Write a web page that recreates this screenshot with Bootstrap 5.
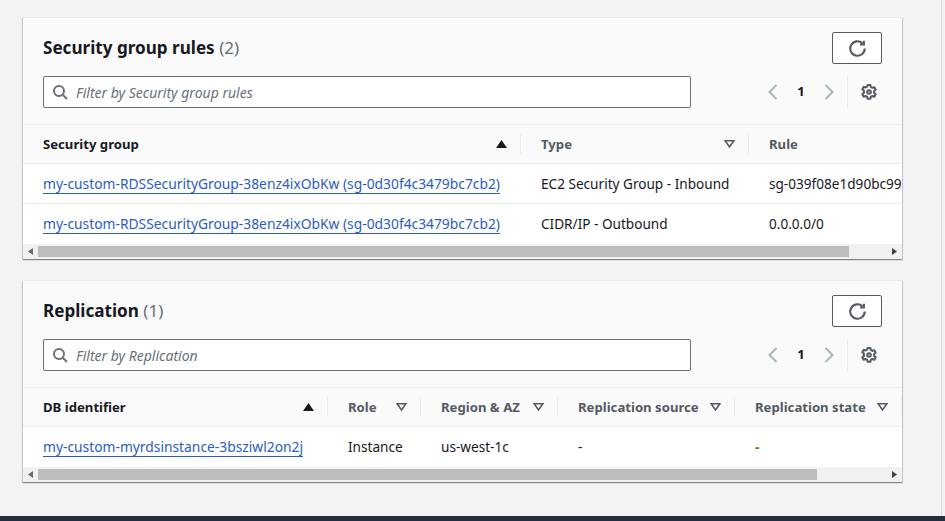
<!DOCTYPE html>
<html lang="en">
<head>
    <meta charset="UTF-8">
    <meta name="viewport" content="width=device-width, initial-scale=1.0">
    <title>Database connectivity</title>
    <link href="https://cdn.jsdelivr.net/npm/bootstrap@5.3.0/dist/css/bootstrap.min.css" rel="stylesheet">
    <style>
        html, body { height: 100%; overflow: hidden; }
        body {
            background: #f2f3f3;
            color: #16191f;
            font-family: "Noto Sans", "Open Sans", sans-serif;
            font-size: 14px;
        }
        .page-area {
            width: 942px;
            height: 516px;
            padding: 17px 39px 0 23px;
            border-right: 1px solid #d5dbdb;
        }
        .page-foot { height: 5px; background: #232f3e; }
        .panel {
            border: 0;
            border-top: 1px solid #eaeded;
            border-radius: 0;
            background: #fafafa;
            box-shadow: 0 1px 1px 0 rgba(0,28,36,.3), 1px 1px 1px 0 rgba(0,28,36,.15), -1px 1px 1px 0 rgba(0,28,36,.15);
            overflow: hidden;
        }
        .panel + .panel { margin-top: 21px; }
        .panel-head { padding: 14px 20px 16px 20px; border-bottom: 1px solid #eaeded; }
        .panel-top { margin-bottom: 12px; }
        .panel-title { font-size: 17.1px; line-height: 30px; font-weight: 700; margin: 0; }
        .panel-title span { font-weight: 400; color: #687078; }
        .refresh-btn {
            width: 50px;
            height: 32px;
            padding: 0;
            background: #fff;
            border: 1px solid #545b64;
            border-radius: 2px;
            color: #545b64;
        }
        .filter-box {
            width: 648px;
            height: 32px;
            background: #fff;
            border: 1px solid #687078;
            border-radius: 2px;
            padding: 0 8px;
            gap: 8px;
            color: #687078;
        }
        .filter-box input {
            flex: 1;
            border: 0;
            outline: 0;
            padding: 0;
            background: transparent;
            font-size: 14px;
            font-style: italic;
        }
        .filter-box input::placeholder { color: #687078; opacity: 1; }
        .pager { padding-left: 74px; height: 32px; color: #aab7b8; }
        .pager-num { width: 40px; text-align: center; font-weight: 700; font-size: 13px; color: #16191f; }
        .pager-sep { width: 1px; height: 32px; background: #eaeded; margin-left: 10px; margin-right: 13px; }
        .gear-icon { color: #545b64; }
        .data-clip { overflow: hidden; }
        .data-grid {
            table-layout: fixed;
            margin: 0;
            --bs-table-bg: transparent;
            border-collapse: separate;
            border-spacing: 0;
        }
        .data-grid th {
            position: relative;
            height: 39px;
            padding: 1px 14px 0 20px;
            background: #fafafa;
            color: #545b64;
            font-size: 13.15px;
            font-weight: 700;
            border-bottom: 1px solid #eaeded;
            vertical-align: middle;
            white-space: nowrap;
        }
        .data-grid th.is-sorted { color: #16191f; }
        .data-grid th::after {
            content: "";
            position: absolute;
            right: 0;
            top: 9px;
            height: 20px;
            width: 1px;
            background: #eaeded;
        }
        .data-grid td {
            height: 40px;
            padding: 1px 0 0 20px;
            background: #fff;
            color: #16191f;
            font-size: 13.6px;
            border-bottom: 1px solid #eaeded;
            vertical-align: middle;
            white-space: nowrap;
            overflow: hidden;
        }
        .data-grid tr:last-child td { border-bottom: 0; }
        .data-grid a {
            color: #2a5cc4;
            font-size: 13.82px;
            text-decoration: underline;
            text-underline-offset: 4px;
            text-decoration-thickness: 1px;
        }
        .state-dash { color: #1fa000; font-weight: 700; }
        .fake-scroll { height: 15px; background: #f1f1f1; }
        .fake-scroll .scroll-btn { width: 15px; }
        .scroll-track { flex: 1; padding: 2px 0; }
        .scroll-thumb { height: 11px; background: #bdbdbd; }
    </style>
</head>
<body>
    <div class="page-area d-flex flex-column">
        <div class="card panel">
            <div class="panel-head">
                <div class="panel-top d-flex justify-content-between align-items-center">
                    <h2 class="panel-title">Security group rules <span>(2)</span></h2>
                    <button class="refresh-btn d-flex align-items-center justify-content-center" type="button" aria-label="Refresh">
                        <svg width="17" height="17" viewBox="0 0 16 16" fill="none" stroke="currentColor" stroke-width="2"><path d="M14.8 8a6.800 6.800 0 1 1-2-4.800"/><path d="M14 .8v3.400h-3.600"/></svg>
                    </button>
                </div>
                <div class="d-flex align-items-center">
                    <div class="filter-box d-flex align-items-center">
                        <svg width="16" height="16" viewBox="0 0 16 16" fill="none" stroke="currentColor" stroke-width="2"><circle cx="7" cy="7" r="5"/><path d="M11 11l4 4"/></svg>
                        <input type="text" placeholder="Filter by Security group rules">
                    </div>
                    <div class="pager d-flex align-items-center">
                        <svg width="16" height="16" viewBox="0 0 16 16" fill="none" stroke="currentColor" stroke-width="2"><path d="M11.5 1l-7 7 7 7"/></svg>
                        <span class="pager-num">1</span>
                        <svg width="16" height="16" viewBox="0 0 16 16" fill="none" stroke="currentColor" stroke-width="2"><path d="M4.5 1l7 7-7 7"/></svg>
                        <span class="pager-sep"></span>
                        <svg class="gear-icon" width="16" height="16" viewBox="0 0 16 16" fill="none" stroke="currentColor" stroke-width="2"><path d="M6.6 1h2.8l.4 2 1.500.9 2-.7 1.400 2.400-1.600 1.400v1.900l1.600 1.300-1.400 2.500-2-.7-1.500.8-.4 2H6.600l-.4-2-1.500-.8-2 .7-1.400-2.500 1.600-1.300V6.600L1.300 5.200l1.400-2.400 2 .7 1.500-.9z" stroke-linejoin="round"/><circle cx="8" cy="8" r="1.800"/></svg>
                    </div>
                </div>
            </div>
            <div class="data-clip">
                <table class="table data-grid" style="width: 1100px">
                    <colgroup><col style="width: 498px"><col style="width: 228px"><col style="width: 374px"></colgroup>
                    <thead>
                        <tr>
                            <th class="is-sorted"><div class="d-flex justify-content-between align-items-center">Security group
                                <svg width="11" height="8" viewBox="0 0 11 8" fill="currentColor"><path d="M5.500 0l5.500 8H0z"/></svg></div></th>
                            <th><div class="d-flex justify-content-between align-items-center">Type
                                <svg width="11" height="8" viewBox="0 0 11 8" fill="none" stroke="currentColor" stroke-width="1.500"><path d="M1.200 .8h8.600L5.500 7z"/></svg></div></th>
                            <th>Rule</th>
                        </tr>
                    </thead>
                    <tbody>
                        <tr>
                            <td><a href="#">my-custom-RDSSecurityGroup-38enz4ixObKw (sg-0d30f4c3479bc7cb2)</a></td>
                            <td>EC2 Security Group - Inbound</td>
                            <td>sg-039f08e1d90bc99</td>
                        </tr>
                        <tr>
                            <td><a href="#">my-custom-RDSSecurityGroup-38enz4ixObKw (sg-0d30f4c3479bc7cb2)</a></td>
                            <td>CIDR/IP - Outbound</td>
                            <td>0.0.0.0/0</td>
                        </tr>
                    </tbody>
                </table>
            </div>
            <div class="fake-scroll d-flex">
                <div class="scroll-btn d-flex align-items-center justify-content-center">
                    <svg width="5" height="7" viewBox="0 0 5 7" fill="#6b6b6b"><path d="M5 0v7L0 3.500z"/></svg>
                </div>
                <div class="scroll-track"><div class="scroll-thumb" style="width: 811px"></div></div>
                <div class="scroll-btn d-flex align-items-center justify-content-center">
                    <svg width="5" height="7" viewBox="0 0 5 7" fill="#404040"><path d="M0 0v7l5-3.500z"/></svg>
                </div>
            </div>
        </div>

        <div class="card panel">
            <div class="panel-head">
                <div class="panel-top d-flex justify-content-between align-items-center">
                    <h2 class="panel-title">Replication <span>(1)</span></h2>
                    <button class="refresh-btn d-flex align-items-center justify-content-center" type="button" aria-label="Refresh">
                        <svg width="17" height="17" viewBox="0 0 16 16" fill="none" stroke="currentColor" stroke-width="2"><path d="M14.8 8a6.800 6.800 0 1 1-2-4.800"/><path d="M14 .8v3.400h-3.600"/></svg>
                    </button>
                </div>
                <div class="d-flex align-items-center">
                    <div class="filter-box d-flex align-items-center">
                        <svg width="16" height="16" viewBox="0 0 16 16" fill="none" stroke="currentColor" stroke-width="2"><circle cx="7" cy="7" r="5"/><path d="M11 11l4 4"/></svg>
                        <input type="text" placeholder="Filter by Replication">
                    </div>
                    <div class="pager d-flex align-items-center">
                        <svg width="16" height="16" viewBox="0 0 16 16" fill="none" stroke="currentColor" stroke-width="2"><path d="M11.5 1l-7 7 7 7"/></svg>
                        <span class="pager-num">1</span>
                        <svg width="16" height="16" viewBox="0 0 16 16" fill="none" stroke="currentColor" stroke-width="2"><path d="M4.5 1l7 7-7 7"/></svg>
                        <span class="pager-sep"></span>
                        <svg class="gear-icon" width="16" height="16" viewBox="0 0 16 16" fill="none" stroke="currentColor" stroke-width="2"><path d="M6.6 1h2.8l.4 2 1.500.9 2-.7 1.400 2.400-1.600 1.400v1.900l1.600 1.300-1.400 2.500-2-.7-1.500.8-.4 2H6.600l-.4-2-1.500-.8-2 .7-1.400-2.500 1.600-1.300V6.600L1.300 5.200l1.400-2.400 2 .7 1.500-.9z" stroke-linejoin="round"/><circle cx="8" cy="8" r="1.800"/></svg>
                    </div>
                </div>
            </div>
            <div class="data-clip">
                <table class="table data-grid" style="width: 1000px">
                    <colgroup><col style="width: 305px"><col style="width: 93px"><col style="width: 137px"><col style="width: 177px"><col style="width: 167px"><col style="width: 121px"></colgroup>
                    <thead>
                        <tr>
                            <th class="is-sorted"><div class="d-flex justify-content-between align-items-center">DB identifier
                                <svg width="11" height="8" viewBox="0 0 11 8" fill="currentColor"><path d="M5.500 0l5.500 8H0z"/></svg></div></th>
                            <th><div class="d-flex justify-content-between align-items-center">Role
                                <svg width="11" height="8" viewBox="0 0 11 8" fill="none" stroke="currentColor" stroke-width="1.500"><path d="M1.200 .8h8.600L5.500 7z"/></svg></div></th>
                            <th><div class="d-flex justify-content-between align-items-center">Region &amp; AZ
                                <svg width="11" height="8" viewBox="0 0 11 8" fill="none" stroke="currentColor" stroke-width="1.500"><path d="M1.200 .8h8.600L5.500 7z"/></svg></div></th>
                            <th><div class="d-flex justify-content-between align-items-center">Replication source
                                <svg width="11" height="8" viewBox="0 0 11 8" fill="none" stroke="currentColor" stroke-width="1.500"><path d="M1.200 .8h8.600L5.500 7z"/></svg></div></th>
                            <th><div class="d-flex justify-content-between align-items-center">Replication state
                                <svg width="11" height="8" viewBox="0 0 11 8" fill="none" stroke="currentColor" stroke-width="1.500"><path d="M1.200 .8h8.600L5.500 7z"/></svg></div></th>
                            <th></th>
                        </tr>
                    </thead>
                    <tbody>
                        <tr>
                            <td><a href="#">my-custom-myrdsinstance-3bsziwl2on2j</a></td>
                            <td>Instance</td>
                            <td>us-west-1c</td>
                            <td>-</td>
                            <td><span class="state-dash">-</span></td>
                            <td></td>
                        </tr>
                    </tbody>
                </table>
            </div>
            <div class="fake-scroll d-flex">
                <div class="scroll-btn d-flex align-items-center justify-content-center">
                    <svg width="5" height="7" viewBox="0 0 5 7" fill="#6b6b6b"><path d="M5 0v7L0 3.500z"/></svg>
                </div>
                <div class="scroll-track"><div class="scroll-thumb" style="width: 779px"></div></div>
                <div class="scroll-btn d-flex align-items-center justify-content-center">
                    <svg width="5" height="7" viewBox="0 0 5 7" fill="#404040"><path d="M0 0v7l5-3.500z"/></svg>
                </div>
            </div>
        </div>
    </div>
    <div class="page-foot"></div>

    <script src="https://cdn.jsdelivr.net/npm/bootstrap@5.3.0/dist/js/bootstrap.bundle.min.js"></script>
</body>
</html>
